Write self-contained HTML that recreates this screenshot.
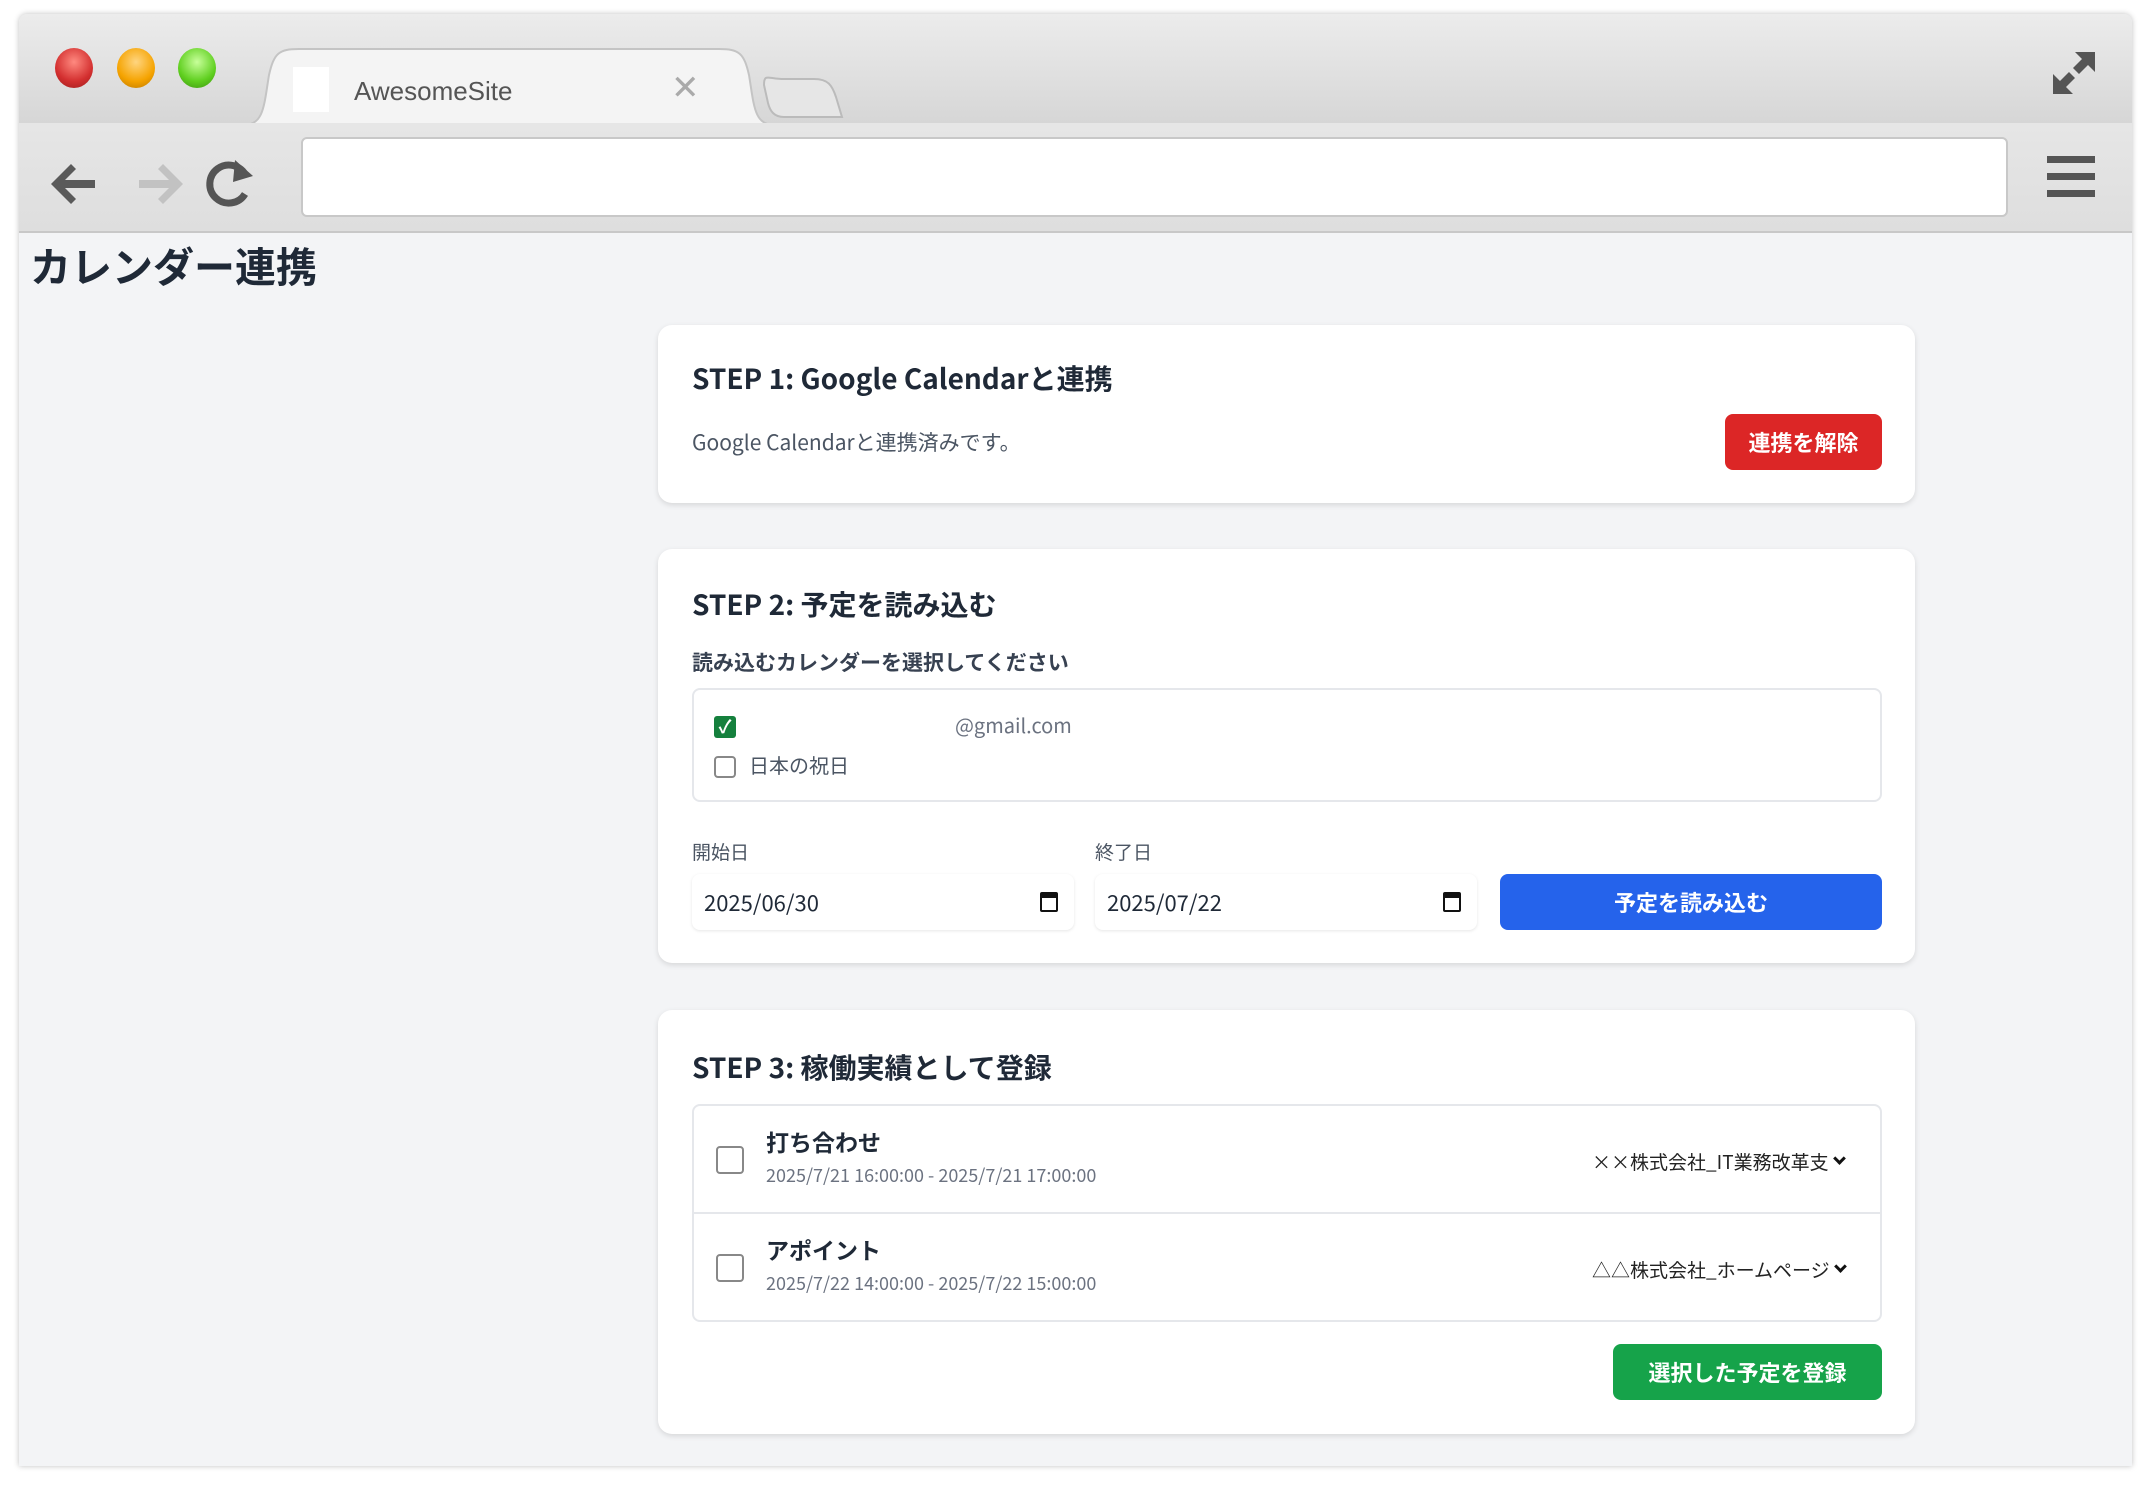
<!DOCTYPE html>
<html><head><meta charset="utf-8"><style>
*{box-sizing:border-box;margin:0;padding:0}
body{width:2148px;height:1493px;background:#fff;font-family:"Liberation Sans","Noto Sans CJK JP",sans-serif;position:relative;overflow:hidden;color:#1f2937}
.abs{position:absolute}
.win{left:19px;top:14px;width:2113px;height:1452px;background:#f3f4f6;border-radius:8px 8px 0 0;overflow:hidden;box-shadow:0 0 6px rgba(0,0,0,.25)}
.tabbar{left:0;top:0;width:2113px;height:110px;background:linear-gradient(#ececec,#d6d6d6)}
.toolbar{left:0;top:109px;width:2113px;height:110px;background:linear-gradient(#e6e6e6,#dedede);border-bottom:2px solid #c8c8c8}
.dot{width:38px;height:40px;border-radius:50%;top:34px}
.card{background:#fff;border-radius:14px;box-shadow:0 2px 6px rgba(0,0,0,.12);left:639px;width:1257px}
h2{position:absolute;font-size:28px;font-weight:bold;color:#1f2937;font-family:"Noto Sans CJK JP",sans-serif}
.jp{font-family:"Noto Sans CJK JP",sans-serif}
.cb{width:22px;height:22px;border:2px solid #888;border-radius:4px;background:#fff}
.btn{color:#fff;font-weight:bold;font-size:22px;display:flex;align-items:center;justify-content:center;border-radius:8px;font-family:"Noto Sans CJK JP",sans-serif}
.inp{background:#fff;border-radius:8px;box-shadow:0 1px 3px rgba(0,0,0,.1);font-size:22px;display:flex;align-items:center;padding-left:12px;font-family:"Noto Sans CJK JP",sans-serif}
.cal{position:absolute;right:16px;top:18px;width:18px;height:20px;border:2px solid #111;border-top:6px solid #111;border-radius:2px}
.sel{font-size:19px;color:#222}
.sel b{display:inline-block;width:9px;height:9px;border-right:3px solid #111;border-bottom:3px solid #111;transform:rotate(45deg);margin:0 0 6px 6px}
</style></head><body>
<div class="abs win">
 <div class="abs tabbar"></div>
 <div class="abs dot" style="left:36px;background:radial-gradient(circle at 50% 35%,#ff8a80,#d32f2f 60%,#9a1c1c)"></div>
 <div class="abs dot" style="left:98px;background:radial-gradient(circle at 50% 35%,#ffd580,#f5a300 60%,#b87500)"></div>
 <div class="abs dot" style="left:159px;background:radial-gradient(circle at 50% 35%,#c8ff9a,#5fcf1f 60%,#3a8f10)"></div>
 <svg class="abs" style="left:225px;top:31px" width="620" height="80"><path d="M0 80 C20 80 20 60 25 30 C30 8 35 4 55 4 L475 4 C495 4 500 8 505 30 C510 60 510 80 530 80 Z" fill="#f4f4f4" stroke="#c4c4c4" stroke-width="2"/><path d="M520 40 C520 28 524 34 540 34 L570 34 C584 34 588 40 592 52 L598 72 L540 72 C530 72 526 66 524 58 Z" fill="#e6e6e6" stroke="#bbb" stroke-width="2"/></svg>
 <div class="abs" style="left:274px;top:53px;width:36px;height:45px;background:#fff"></div>
 <div class="abs" style="left:335px;top:62px;font-size:26px;color:#555">AwesomeSite</div>
 <div class="abs" style="left:652px;top:54px;font-size:34px;color:#aaa">✕</div>
 <svg class="abs" style="left:2030px;top:34px" width="50" height="50"><g fill="#555"><path d="M26 4 H46 V24 L39 17 L30 26 L24 20 L33 11 Z"/><path d="M4 46 V26 L11 33 L20 24 L26 30 L17 39 L24 46 Z"/></g></svg>
 <div class="abs toolbar"></div>
 <svg class="abs" style="left:28px;top:140px" width="220" height="60"><g fill="#5a5a5a"><path d="M4 30 L24 10 L29 15 L18 26 H48 V34 H18 L29 45 L24 50 Z"/></g><g fill="#c2c2c2" transform="translate(88,0)"><path d="M48 30 L28 10 L23 15 L34 26 H4 V34 H34 L23 45 L28 50 Z"/></g><path d="M215 22 A19 19 0 1 0 214 40" fill="none" stroke="#555" stroke-width="7" transform="translate(-16,0)"/><path d="M188 6 L206 22 L186 28 Z" fill="#555"/></svg>
 <div class="abs" style="left:282px;top:123px;width:1707px;height:80px;background:#fff;border:2px solid #c8c8c8;border-radius:6px"></div>
 <div class="abs" style="left:2028px;top:142px;width:48px;height:42px;background:linear-gradient(#555 0 7px,transparent 7px 17px,#555 17px 24px,transparent 24px 34px,#555 34px 41px,transparent 41px)"></div>
 <div class="abs jp" style="left:11px;top:220px;font-size:41px;font-weight:bold;color:#1f2937">カレンダー連携</div>

 <div class="abs card" style="top:311px;height:178px">
  <h2 style="left:34px;top:33px">STEP 1: Google Calendarと連携</h2>
  <div class="abs jp" style="left:34px;top:102px;font-size:21px;color:#4b5563">Google Calendarと連携済みです。</div>
  <div class="abs btn" style="left:1067px;top:89px;width:157px;height:56px;background:#dc2626">連携を解除</div>
 </div>

 <div class="abs card" style="top:535px;height:414px">
  <h2 style="left:34px;top:35px">STEP 2: 予定を読み込む</h2>
  <div class="abs jp" style="left:34px;top:98px;font-size:21px;font-weight:bold;color:#374151">読み込むカレンダーを選択してください</div>
  <div class="abs" style="left:34px;top:139px;width:1190px;height:114px;border:2px solid #e5e7eb;border-radius:8px">
   <div class="abs" style="left:20px;top:26px;width:22px;height:22px;background:#15803d;border-radius:3px;color:#fff;font-size:18px;line-height:22px;text-align:center;font-weight:bold">✓</div>
   <div class="abs jp" style="left:261px;top:20px;font-size:20px;color:#6b7280">@gmail.com</div>
   <div class="abs cb" style="left:20px;top:66px"></div>
   <div class="abs jp" style="left:55px;top:60px;font-size:20px;color:#4b5563">日本の祝日</div>
  </div>
  <div class="abs jp" style="left:34px;top:289px;font-size:19px;color:#4b5563">開始日</div>
  <div class="abs jp" style="left:437px;top:289px;font-size:19px;color:#4b5563">終了日</div>
  <div class="abs inp" style="left:34px;top:325px;width:382px;height:56px">2025/06/30<span class="cal"></span></div>
  <div class="abs inp" style="left:437px;top:325px;width:382px;height:56px">2025/07/22<span class="cal"></span></div>
  <div class="abs btn" style="left:842px;top:325px;width:382px;height:56px;background:#2563eb">予定を読み込む</div>
 </div>

 <div class="abs card" style="top:996px;height:424px">
  <h2 style="left:34px;top:37px">STEP 3: 稼働実績として登録</h2>
  <div class="abs" style="left:34px;top:94px;width:1190px;height:218px;border:2px solid #e5e7eb;border-radius:8px">
   <div class="abs" style="left:0;top:106px;width:1186px;height:2px;background:#e5e7eb"></div>
   <div class="abs cb" style="left:22px;top:40px;width:28px;height:28px"></div>
   <div class="abs jp" style="left:72px;top:18px;font-size:23px;font-weight:bold;color:#1f2937">打ち合わせ</div>
   <div class="abs jp" style="left:72px;top:56px;font-size:18px;color:#6b7280">2025/7/21 16:00:00 - 2025/7/21 17:00:00</div>
   <div class="abs jp sel" style="left:898px;top:42px">××株式会社_IT業務改革支<b></b></div>
   <div class="abs cb" style="left:22px;top:148px;width:28px;height:28px"></div>
   <div class="abs jp" style="left:72px;top:126px;font-size:23px;font-weight:bold;color:#1f2937">アポイント</div>
   <div class="abs jp" style="left:72px;top:164px;font-size:18px;color:#6b7280">2025/7/22 14:00:00 - 2025/7/22 15:00:00</div>
   <div class="abs jp sel" style="left:898px;top:150px">△△株式会社_ホームページ<b></b></div>
  </div>
  <div class="abs btn" style="left:955px;top:334px;width:269px;height:56px;background:#16a34a">選択した予定を登録</div>
 </div>
</div>
</body></html>
